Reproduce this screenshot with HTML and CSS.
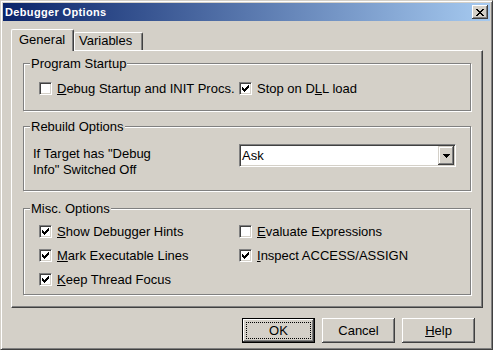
FILE: index.html
```html
<!DOCTYPE html>
<html lang="en">
<head>
    <meta charset="UTF-8">
    <title>Debugger Options</title>
    <link rel="stylesheet" href="styles.css">
</head>
<body>
    <div class="window">
        <div class="titlebar">
            <span class="title">Debugger Options</span>
            <span class="close">
                <svg width="8" height="7" viewBox="0 0 8 7" shape-rendering="crispEdges"><path d="M0 0h2v1H0zM6 0h2v1H6zM1 1h2v1H1zM5 1h2v1H5zM2 2h4v1H2zM3 3h2v1H3zM2 4h4v1H2zM1 5h2v1H1zM5 5h2v1H5zM0 6h2v1H0zM6 6h2v1H6z" fill="#000"/></svg>
            </span>
        </div>

        <div class="content">
            <div class="tabs">
                <div class="tab active">General</div>
                <div class="tab second">Variables</div>
            </div>

            <div class="panel">
                <fieldset class="group startup">
                    <legend>Program Startup</legend>
                    <div class="opts">
                        <label class="opt"><span class="check"></span><span><u>D</u>ebug Startup and INIT Procs.</span></label>
                        <label class="opt"><span class="check on"><svg width="7" height="7" viewBox="0 0 7 7" shape-rendering="crispEdges"><path d="M0 2h1v3H0zM1 3h1v3H1zM2 4h1v3H2zM3 3h1v3H3zM4 2h1v3H4zM5 1h1v3H5zM6 0h1v3H6z" fill="#000"/></svg></span><span>Stop on D<u>L</u>L load</span></label>
                    </div>
                </fieldset>

                <fieldset class="group rebuild">
                    <legend>Rebuild Options</legend>
                    <div class="rebuild-row">
                        <div class="rebuild-label">If Target has &quot;Debug<br>Info&quot; Switched Off</div>
                        <div class="select">
                            <span class="select-value">Ask</span>
                            <span class="select-btn">
                                <svg width="7" height="4" viewBox="0 0 7 4" shape-rendering="crispEdges"><path d="M0 0h7v1H0zM1 1h5v1H1zM2 2h3v1H2zM3 3h1v1H3z" fill="#000"/></svg>
                            </span>
                        </div>
                    </div>
                </fieldset>

                <fieldset class="group misc">
                    <legend>Misc. Options</legend>
                    <div class="opts">
                        <label class="opt"><span class="check on"><svg width="7" height="7" viewBox="0 0 7 7" shape-rendering="crispEdges"><path d="M0 2h1v3H0zM1 3h1v3H1zM2 4h1v3H2zM3 3h1v3H3zM4 2h1v3H4zM5 1h1v3H5zM6 0h1v3H6z" fill="#000"/></svg></span><span><u>S</u>how Debugger Hints</span></label>
                        <label class="opt"><span class="check"></span><span><u>E</u>valuate Expressions</span></label>
                        <label class="opt"><span class="check on"><svg width="7" height="7" viewBox="0 0 7 7" shape-rendering="crispEdges"><path d="M0 2h1v3H0zM1 3h1v3H1zM2 4h1v3H2zM3 3h1v3H3zM4 2h1v3H4zM5 1h1v3H5zM6 0h1v3H6z" fill="#000"/></svg></span><span><u>M</u>ark Executable Lines</span></label>
                        <label class="opt"><span class="check on"><svg width="7" height="7" viewBox="0 0 7 7" shape-rendering="crispEdges"><path d="M0 2h1v3H0zM1 3h1v3H1zM2 4h1v3H2zM3 3h1v3H3zM4 2h1v3H4zM5 1h1v3H5zM6 0h1v3H6z" fill="#000"/></svg></span><span><u>I</u>nspect ACCESS/ASSIGN</span></label>
                        <label class="opt"><span class="check on"><svg width="7" height="7" viewBox="0 0 7 7" shape-rendering="crispEdges"><path d="M0 2h1v3H0zM1 3h1v3H1zM2 4h1v3H2zM3 3h1v3H3zM4 2h1v3H4zM5 1h1v3H5zM6 0h1v3H6z" fill="#000"/></svg></span><span><u>K</u>eep Thread Focus</span></label>
                    </div>
                </fieldset>
            </div>

            <div class="buttons">
                <button class="btn default"><span class="focus">OK</span></button>
                <button class="btn">Cancel</button>
                <button class="btn"><span><u>H</u>elp</span></button>
            </div>
        </div>
    </div>
</body>
</html>
```

FILE: styles.css
```css
body {
    margin: 0;
    background-color: #d4d0c8;
    font-family: "Liberation Sans", Arial, sans-serif;
    font-size: 13px;
    color: #000;
}

.window {
    width: 493px;
    height: 350px;
    box-sizing: border-box;
    padding: 2px;
    border: 1px solid;
    border-color: #d4d0c8 #404040 #404040 #d4d0c8;
    box-shadow: inset 1px 1px #fff, inset -1px -1px #808080;
}

.titlebar {
    height: 18px;
    display: flex;
    align-items: center;
    justify-content: space-between;
    padding: 0 2px 0 2px;
    background: linear-gradient(to right, #0a246a, #a6caf0);
}

.title {
    color: #fff;
    font-weight: bold;
    font-size: 11px;
    letter-spacing: 0.35px;
}

.close {
    width: 16px;
    height: 14px;
    box-sizing: border-box;
    display: flex;
    align-items: center;
    justify-content: center;
    padding-top: 1px;
    background-color: #d4d0c8;
    box-shadow: inset -1px -1px #404040, inset 1px 1px #fff, inset -2px -2px #808080;
}

.close svg {
    display: block;
}

.content {
    padding: 8px 7px 0 8px;
}

/* tabs */
.tabs {
    display: flex;
    align-items: flex-end;
    height: 21px;
}

.tab {
    box-sizing: border-box;
    line-height: 15px;
    border: 1px solid;
    border-bottom: none;
    border-color: #fff #404040 #fff #fff;
    border-radius: 2px 2px 0 0;
    box-shadow: inset -1px 0 #808080;
    background-color: #d4d0c8;
}

.tab.active {
    position: relative;
    z-index: 1;
    width: 63px;
    height: 22px;
    margin-bottom: -1px;
    padding: 2px 0 0 7px;
}

.tab.second {
    width: 69px;
    height: 18px;
    padding: 0 0 0 4px;
}

.panel {
    height: 258px;
    box-sizing: border-box;
    padding: 5px 11px 0 11px;
    border: 1px solid;
    border-color: #fff #404040 #404040 #fff;
    box-shadow: inset -1px -1px #808080;
}

/* group boxes */
.group {
    margin: 0;
    padding: 0;
    min-width: 0;
    border: 1px solid #808080;
    box-shadow: inset 1px 1px #fff, 1px 1px #fff;
}

.group legend {
    margin-left: 6px;
    padding: 0 1px;
    line-height: 15px;
    background-color: #d4d0c8;
}

.rebuild {
    margin-top: 8px;
}

.misc {
    margin-top: 10px;
}

.opts {
    display: grid;
    grid-template-columns: 200px auto;
}

.startup .opts {
    padding: 10px 0 14px 15px;
}

.misc .opts {
    padding: 8px 0 7px 15px;
    row-gap: 9px;
}

.opt {
    display: flex;
    align-items: flex-start;
    gap: 5px;
    height: 15px;
    line-height: 15px;
    white-space: nowrap;
}

.check {
    flex: none;
    width: 13px;
    height: 13px;
    margin-top: 1px;
    box-sizing: border-box;
    background-color: #fff;
    border: 1px solid;
    border-color: #808080 #fff #fff #808080;
    box-shadow: inset 1px 1px #404040, inset -1px -1px #d4d0c8;
}

.check svg {
    display: block;
    margin: 2px;
}

/* rebuild row */
.rebuild-row {
    display: grid;
    grid-template-columns: 206px 217px;
    padding: 10px 0 12px 9px;
}

.rebuild-label {
    margin-top: 2px;
    line-height: 16px;
}

.select {
    width: 217px;
    height: 23px;
    box-sizing: border-box;
    display: flex;
    padding: 1px;
    background-color: #fff;
    border: 1px solid;
    border-color: #808080 #fff #fff #808080;
    box-shadow: inset 1px 1px #404040, inset -1px -1px #d4d0c8;
}

.select-value {
    flex: 1;
    padding-left: 1px;
    line-height: 19px;
}

.select-btn {
    width: 16px;
    height: 19px;
    display: flex;
    align-items: center;
    justify-content: center;
    background-color: #d4d0c8;
    box-shadow: inset -1px -1px #404040, inset 1px 1px #d4d0c8, inset -2px -2px #808080, inset 2px 2px #fff;
}

.select-btn svg {
    display: block;
}

/* buttons */
.buttons {
    display: flex;
    justify-content: flex-end;
    gap: 7px;
    margin-top: 10px;
    padding-right: 8px;
}

.btn {
    width: 73px;
    height: 25px;
    box-sizing: border-box;
    padding: 0;
    margin: 0;
    border: none;
    display: flex;
    align-items: center;
    justify-content: center;
    font: inherit;
    color: #000;
    background-color: #d4d0c8;
    box-shadow: inset -1px -1px #404040, inset 1px 1px #fff, inset -2px -2px #808080, inset 2px 2px #d4d0c8;
}

.btn.default {
    border: 1px solid #000;
    padding: 3px;
}

.btn .focus {
    flex: 1;
    align-self: stretch;
    display: flex;
    align-items: center;
    justify-content: center;
    border: 1px dotted #000;
}
```
